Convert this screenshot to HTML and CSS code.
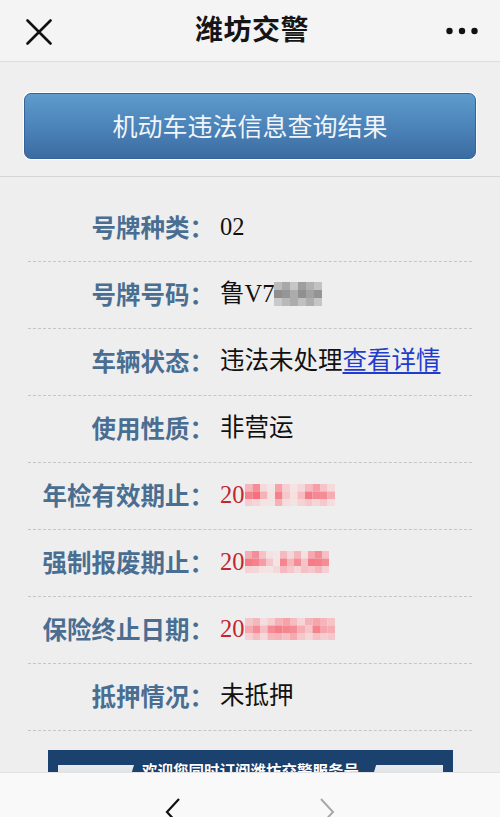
FILE: index.html
```html
<!DOCTYPE html>
<html lang="zh-CN">
<head>
<meta charset="utf-8">
<title>潍坊交警</title>
<link rel="stylesheet" href="styles.css">
</head>
<body>
<div class="page">
  <header class="topbar">
    <span class="icon icon-close">
      <svg width="26" height="26" viewBox="0 0 26 26"><path d="M1.5 1.5 L24.5 24.5 M24.5 1.5 L1.5 24.5" stroke="#111" stroke-width="2.6" stroke-linecap="round" fill="none"/></svg>
    </span>
    <h1 class="title">潍坊交警</h1>
    <span class="icon icon-more">
      <svg width="32" height="8" viewBox="0 0 32 8"><circle cx="3.5" cy="4" r="3.2" fill="#111"/><circle cx="16" cy="4" r="3.2" fill="#111"/><circle cx="28.5" cy="4" r="3.2" fill="#111"/></svg>
    </span>
  </header>

  <section class="hero">
    <div class="result-btn">机动车违法信息查询结果</div>
  </section>

  <main class="content">
    <ul class="info">
      <li class="row"><span class="label">号牌种类：</span><span class="value">02</span></li>
      <li class="row"><span class="label">号牌号码：</span><span class="value">鲁V7<svg class="mosaic mosaic-gray" width="48" height="24" viewBox="0 0 48 24">
        <rect x="0" y="0" width="8" height="8" fill="#d6d6d6"/><rect x="8" y="0" width="8" height="8" fill="#bfbfbf"/><rect x="16" y="0" width="8" height="8" fill="#e1e1e1"/><rect x="24" y="0" width="8" height="8" fill="#b3b3b3"/><rect x="32" y="0" width="8" height="8" fill="#c9c9c9"/><rect x="40" y="0" width="8" height="8" fill="#dddddd"/>
        <rect x="0" y="8" width="8" height="8" fill="#a3a3a3"/><rect x="8" y="8" width="8" height="8" fill="#ababab"/><rect x="16" y="8" width="8" height="8" fill="#c4c4c4"/><rect x="24" y="8" width="8" height="8" fill="#a4a4a4"/><rect x="32" y="8" width="8" height="8" fill="#b8b8b8"/><rect x="40" y="8" width="8" height="8" fill="#a8a8a8"/>
        <rect x="0" y="16" width="8" height="8" fill="#e4e4e4"/><rect x="8" y="16" width="8" height="8" fill="#d2d2d2"/><rect x="16" y="16" width="8" height="8" fill="#c3c3c3"/><rect x="24" y="16" width="8" height="8" fill="#dadada"/><rect x="32" y="16" width="8" height="8" fill="#c6c6c6"/><rect x="40" y="16" width="8" height="8" fill="#e0e0e0"/>
      </svg></span></li>
      <li class="row"><span class="label">车辆状态：</span><span class="value">违法未处理<a class="link" href="#">查看详情</a></span></li>
      <li class="row"><span class="label">使用性质：</span><span class="value">非营运</span></li>
      <li class="row"><span class="label">年检有效期止：</span><span class="value red">20<svg class="mosaic mosaic-red" width="90" height="22" viewBox="0 0 90 22">
        <rect x="0" y="0" width="7.5" height="7.5" fill="#f4c4c7"/><rect x="7.5" y="0" width="7.5" height="7.5" fill="#ee9ea4"/><rect x="15" y="0" width="7.5" height="7.5" fill="#fbe6e7"/><rect x="22.5" y="0" width="7.5" height="7.5" fill="#f7f0f0"/><rect x="30" y="0" width="7.5" height="7.5" fill="#f1b3b7"/><rect x="37.5" y="0" width="7.5" height="7.5" fill="#f7dcde"/><rect x="45" y="0" width="7.5" height="7.5" fill="#f9eeee"/><rect x="52.5" y="0" width="7.5" height="7.5" fill="#f7e3e4"/><rect x="60" y="0" width="7.5" height="7.5" fill="#f3c8cb"/><rect x="67.5" y="0" width="7.5" height="7.5" fill="#efb0b5"/><rect x="75" y="0" width="7.5" height="7.5" fill="#f5d2d4"/><rect x="82.5" y="0" width="7.5" height="7.5" fill="#f7e6e7"/>
        <rect x="0" y="7.5" width="7.5" height="7.5" fill="#ec949b"/><rect x="7.5" y="7.5" width="7.5" height="7.5" fill="#e8838b"/><rect x="15" y="7.5" width="7.5" height="7.5" fill="#f3c1c4"/><rect x="22.5" y="7.5" width="7.5" height="7.5" fill="#f8ecec"/><rect x="30" y="7.5" width="7.5" height="7.5" fill="#eb949a"/><rect x="37.5" y="7.5" width="7.5" height="7.5" fill="#f6d6d8"/><rect x="45" y="7.5" width="7.5" height="7.5" fill="#f8eaea"/><rect x="52.5" y="7.5" width="7.5" height="7.5" fill="#f3cbce"/><rect x="60" y="7.5" width="7.5" height="7.5" fill="#ea8f96"/><rect x="67.5" y="7.5" width="7.5" height="7.5" fill="#ec9aa0"/><rect x="75" y="7.5" width="7.5" height="7.5" fill="#ee9fa5"/><rect x="82.5" y="7.5" width="7.5" height="7.5" fill="#f2bcc0"/>
        <rect x="0" y="15" width="7.5" height="7" fill="#f6d9db"/><rect x="7.5" y="15" width="7.5" height="7" fill="#f7e1e2"/><rect x="15" y="15" width="7.5" height="7" fill="#f9eeee"/><rect x="22.5" y="15" width="7.5" height="7" fill="#f8efef"/><rect x="30" y="15" width="7.5" height="7" fill="#f2c0c3"/><rect x="37.5" y="15" width="7.5" height="7" fill="#f8e9ea"/><rect x="45" y="15" width="7.5" height="7" fill="#f8eeee"/><rect x="52.5" y="15" width="7.5" height="7" fill="#f6dedf"/><rect x="60" y="15" width="7.5" height="7" fill="#f5d4d6"/><rect x="67.5" y="15" width="7.5" height="7" fill="#f7e2e3"/><rect x="75" y="15" width="7.5" height="7" fill="#f5d6d8"/><rect x="82.5" y="15" width="7.5" height="7" fill="#f8e8e9"/>
      </svg></span></li>
      <li class="row"><span class="label">强制报废期止：</span><span class="value red">20<svg class="mosaic mosaic-red" width="84" height="22" viewBox="0 0 84 22">
        <rect x="0" y="0" width="7" height="7.5" fill="#f2bcc0"/><rect x="7" y="0" width="7" height="7.5" fill="#ee9fa5"/><rect x="14" y="0" width="7" height="7.5" fill="#f5d0d3"/><rect x="21" y="0" width="7" height="7.5" fill="#f8ecec"/><rect x="28" y="0" width="7" height="7.5" fill="#f9f1f1"/><rect x="35" y="0" width="7" height="7.5" fill="#f4c8cb"/><rect x="42" y="0" width="7" height="7.5" fill="#f7e2e3"/><rect x="49" y="0" width="7" height="7.5" fill="#f3c5c8"/><rect x="56" y="0" width="7" height="7.5" fill="#f8ebeb"/><rect x="63" y="0" width="7" height="7.5" fill="#f1b8bc"/><rect x="70" y="0" width="7" height="7.5" fill="#ee9ea4"/><rect x="77" y="0" width="7" height="7.5" fill="#f4cdd0"/>
        <rect x="0" y="7.5" width="7" height="7.5" fill="#ea8c93"/><rect x="7" y="7.5" width="7" height="7.5" fill="#ec959b"/><rect x="14" y="7.5" width="7" height="7.5" fill="#f0aeb3"/><rect x="21" y="7.5" width="7" height="7.5" fill="#f5d4d6"/><rect x="28" y="7.5" width="7" height="7.5" fill="#f9f0f0"/><rect x="35" y="7.5" width="7" height="7.5" fill="#ec979d"/><rect x="42" y="7.5" width="7" height="7.5" fill="#f3c6c9"/><rect x="49" y="7.5" width="7" height="7.5" fill="#ef9fa5"/><rect x="56" y="7.5" width="7" height="7.5" fill="#f5d2d4"/><rect x="63" y="7.5" width="7" height="7.5" fill="#ea8e95"/><rect x="70" y="7.5" width="7" height="7.5" fill="#eb9299"/><rect x="77" y="7.5" width="7" height="7.5" fill="#ee9fa5"/>
        <rect x="0" y="15" width="7" height="7" fill="#f7e0e1"/><rect x="7" y="15" width="7" height="7" fill="#f7e3e4"/><rect x="14" y="15" width="7" height="7" fill="#f9eeee"/><rect x="21" y="15" width="7" height="7" fill="#f9f0f0"/><rect x="28" y="15" width="7" height="7" fill="#f7e4e5"/><rect x="35" y="15" width="7" height="7" fill="#f3c8cb"/><rect x="42" y="15" width="7" height="7" fill="#f5d5d7"/><rect x="49" y="15" width="7" height="7" fill="#f7e3e4"/><rect x="56" y="15" width="7" height="7" fill="#f4cfd1"/><rect x="63" y="15" width="7" height="7" fill="#f5d6d8"/><rect x="70" y="15" width="7" height="7" fill="#f3c6c9"/><rect x="77" y="15" width="7" height="7" fill="#f6dcde"/>
      </svg></span></li>
      <li class="row"><span class="label">保险终止日期：</span><span class="value red">20<svg class="mosaic mosaic-red" width="90" height="22" viewBox="0 0 90 22">
        <rect x="0" y="0" width="7.5" height="7.5" fill="#f5d3d5"/><rect x="7.5" y="0" width="7.5" height="7.5" fill="#f3c6c9"/><rect x="15" y="0" width="7.5" height="7.5" fill="#f8e9ea"/><rect x="22.5" y="0" width="7.5" height="7.5" fill="#f6dadc"/><rect x="30" y="0" width="7.5" height="7.5" fill="#f2c0c3"/><rect x="37.5" y="0" width="7.5" height="7.5" fill="#f0b3b7"/><rect x="45" y="0" width="7.5" height="7.5" fill="#f4cacd"/><rect x="52.5" y="0" width="7.5" height="7.5" fill="#f7e2e3"/><rect x="60" y="0" width="7.5" height="7.5" fill="#f2c2c5"/><rect x="67.5" y="0" width="7.5" height="7.5" fill="#f0b5b9"/><rect x="75" y="0" width="7.5" height="7.5" fill="#f3c4c7"/><rect x="82.5" y="0" width="7.5" height="7.5" fill="#f5d2d4"/>
        <rect x="0" y="7.5" width="7.5" height="7.5" fill="#f1b9bd"/><rect x="7.5" y="7.5" width="7.5" height="7.5" fill="#ee9fa5"/><rect x="15" y="7.5" width="7.5" height="7.5" fill="#f4cdd0"/><rect x="22.5" y="7.5" width="7.5" height="7.5" fill="#ee9ea4"/><rect x="30" y="7.5" width="7.5" height="7.5" fill="#eb9198"/><rect x="37.5" y="7.5" width="7.5" height="7.5" fill="#ec979d"/><rect x="45" y="7.5" width="7.5" height="7.5" fill="#ef9fa5"/><rect x="52.5" y="7.5" width="7.5" height="7.5" fill="#f2bec1"/><rect x="60" y="7.5" width="7.5" height="7.5" fill="#f5d3d5"/><rect x="67.5" y="7.5" width="7.5" height="7.5" fill="#ec969c"/><rect x="75" y="7.5" width="7.5" height="7.5" fill="#f1b6ba"/><rect x="82.5" y="7.5" width="7.5" height="7.5" fill="#f2bcc0"/>
        <rect x="0" y="15" width="7.5" height="7" fill="#f6dcde"/><rect x="7.5" y="15" width="7.5" height="7" fill="#f4cbce"/><rect x="15" y="15" width="7.5" height="7" fill="#f7e4e5"/><rect x="22.5" y="15" width="7.5" height="7" fill="#f3c6c9"/><rect x="30" y="15" width="7.5" height="7" fill="#f2c1c4"/><rect x="37.5" y="15" width="7.5" height="7" fill="#f4cdd0"/><rect x="45" y="15" width="7.5" height="7" fill="#f1b9bd"/><rect x="52.5" y="15" width="7.5" height="7" fill="#f5d5d7"/><rect x="60" y="15" width="7.5" height="7" fill="#f7e3e4"/><rect x="67.5" y="15" width="7.5" height="7" fill="#f4cfd1"/><rect x="75" y="15" width="7.5" height="7" fill="#f6dadc"/><rect x="82.5" y="15" width="7.5" height="7" fill="#f5d4d6"/>
      </svg></span></li>
      <li class="row"><span class="label">抵押情况：</span><span class="value">未抵押</span></li>
    </ul>

    <div class="banner">
      <div class="banner-bar">
        <span class="bar-side bar-left"></span>
        <span class="banner-text">欢迎您同时订阅潍坊交警服务号</span>
        <span class="bar-side bar-right"></span>
      </div>
    </div>
  </main>

  <footer class="toolbar">
    <span class="nav nav-back">
      <svg width="16" height="30" viewBox="0 0 16 30"><polyline points="14,2 2,15 14,28" fill="none" stroke="#111" stroke-width="2.2" stroke-linejoin="miter"/></svg>
    </span>
    <span class="nav nav-forward">
      <svg width="16" height="30" viewBox="0 0 16 30"><polyline points="2,2 14,15 2,28" fill="none" stroke="#a9a9a9" stroke-width="2" stroke-linejoin="miter"/></svg>
    </span>
  </footer>
</div>
</body>
</html>
```

FILE: styles.css
```css
* {
  box-sizing: border-box;
}

html, body {
  margin: 0;
  padding: 0;
}

body {
  background: #efeeee;
  font-family: "Noto Sans CJK SC", "Noto Sans", sans-serif;
  color: #111;
}

.page {
  width: 500px;
  height: 817px;
  display: flex;
  flex-direction: column;
  overflow: hidden;
}

/* ---------- top bar ---------- */
.topbar {
  height: 62px;
  flex: 0 0 62px;
  background: #f4f4f4;
  border-bottom: 1px solid #dedede;
  display: flex;
  align-items: center;
  justify-content: space-between;
  padding: 0 22px 0 26px;
}

.icon {
  display: flex;
  align-items: center;
}

.icon-close {
  width: 32px;
  margin-top: 2px;
}

.icon-more {
  width: 32px;
}

.title {
  margin: 0;
  font-size: 28px;
  font-weight: 700;
  line-height: 1;
  letter-spacing: 0.5px;
  color: #151515;
  padding-bottom: 6px;
}

/* ---------- hero button ---------- */
.hero {
  flex: 0 0 115px;
  background: #f0efef;
  border-bottom: 1px solid #d6d5d5;
  padding: 31px 24px 0;
}

.result-btn {
  height: 66px;
  border-radius: 7px;
  border: 1px solid #33649a;
  background: linear-gradient(to bottom, #5f9bcc 0%, #4c84b9 50%, #3b6ca2 100%);
  box-shadow: 0 0 0 1px #fbfdff;
  color: #f1f5f9;
  font-size: 25px;
  line-height: 1;
  display: flex;
  align-items: center;
  justify-content: center;
  padding-bottom: 1px;
}

/* ---------- info list ---------- */
.content {
  flex: 1 1 auto;
  min-height: 0;
  overflow: hidden;
  background: #efeeee;
  padding-top: 18px;
}

.info {
  list-style: none;
  margin: 0 28px;
  padding: 0;
}

.row {
  height: 67px;
  display: flex;
  align-items: center;
  border-bottom: 1px dashed #c6c5c5;
  padding-bottom: 1px;
}

.label {
  width: 186px;
  flex: 0 0 186px;
  text-align: right;
  font-size: 24.5px;
  font-weight: 700;
  color: #4a6e92;
  line-height: 1;
  white-space: nowrap;
}

.value {
  margin-left: 6px;
  font-family: "Liberation Serif", "Noto Sans CJK SC", serif;
  font-size: 24.5px;
  line-height: 1;
  color: #111;
  white-space: nowrap;
  display: flex;
  align-items: center;
}

.value.red {
  color: #c3262c;
}

.link {
  color: #1f3ccc;
  text-decoration: underline;
  text-decoration-thickness: 1.5px;
  text-underline-offset: 3px;
}

.mosaic {
  display: block;
  margin-top: -2px;
}

.mosaic-gray {
  filter: brightness(0.88);
}

.mosaic-red {
  filter: saturate(1.7) brightness(0.96);
}

/* ---------- banner ---------- */
.banner {
  margin: 19px 47px 0 48px;
  height: 80px;
  background: #1b416f;
  padding-top: 13px;
}

.banner-bar {
  display: flex;
  align-items: flex-start;
  padding: 0 10px;
}

.bar-side {
  flex: 1 1 auto;
  height: 30px;
  margin-top: 2px;
  background: linear-gradient(to bottom, #e9ebee 0%, #c6cbd2 100%);
}

.bar-left {
  clip-path: polygon(0 0, 100% 0, 88% 100%, 0 100%);
}

.bar-right {
  clip-path: polygon(12% 0, 100% 0, 100% 100%, 0 100%);
}

.banner-text {
  flex: 0 0 auto;
  padding: 0 8px;
  color: #ffffff;
  font-size: 15.5px;
  font-weight: 700;
  line-height: 1;
  text-shadow: 0 0 1px #0c2748;
}

/* ---------- bottom toolbar ---------- */
.toolbar {
  flex: 0 0 45px;
  background: #f9f9f9;
  border-top: 1px solid #e3e3e3;
  display: flex;
  justify-content: center;
  align-items: flex-start;
  gap: 124px;
  padding-top: 24px;
  overflow: hidden;
}

.nav {
  width: 30px;
  display: flex;
  justify-content: center;
}
```
